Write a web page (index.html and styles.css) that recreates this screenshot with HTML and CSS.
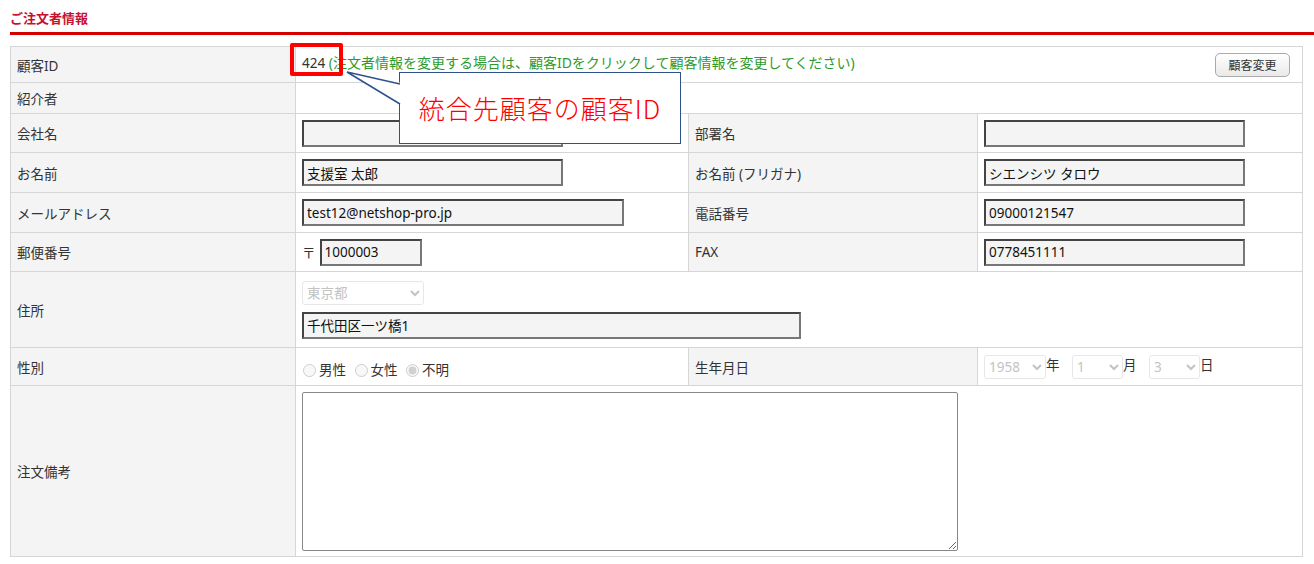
FILE: index.html
```html
<!DOCTYPE html>
<html lang="ja">
<head>
  <meta charset="UTF-8">
  <title>ご注文者情報</title>
  <link rel="stylesheet" href="styles.css">
</head>
<body>
  <div class="page">
    <h3 class="section-title">ご注文者情報</h3>

    <table class="form-table">
      <colgroup>
        <col style="width: 285px">
        <col style="width: 393px">
        <col style="width: 289px">
        <col>
      </colgroup>
      <tr class="row-id">
        <th>顧客ID</th>
        <td colspan="3" class="id-cell">
          <span class="cust-id">424</span> <span class="note">(注文者情報を変更する場合は、顧客IDをクリックして顧客情報を変更してください)</span>
          <button class="btn-small">顧客変更</button>
        </td>
      </tr>
      <tr class="row-ref">
        <th>紹介者</th>
        <td colspan="3"></td>
      </tr>
      <tr class="row-std short">
        <th>会社名</th>
        <td><input type="text" class="box w260" value=""></td>
        <th>部署名</th>
        <td><input type="text" class="box w260" value=""></td>
      </tr>
      <tr class="row-std">
        <th>お名前</th>
        <td><input type="text" class="box w260" value="支援室 太郎"></td>
        <th>お名前 (フリガナ)</th>
        <td><input type="text" class="box w260" value="シエンシツ タロウ"></td>
      </tr>
      <tr class="row-std">
        <th>メールアドレス</th>
        <td><input type="text" class="box w321" value="test12@netshop-pro.jp"></td>
        <th>電話番号</th>
        <td><input type="text" class="box w260" value="09000121547"></td>
      </tr>
      <tr class="row-std short">
        <th>郵便番号</th>
        <td><span class="zip-mark">〒</span><input type="text" class="box w101" value="1000003"></td>
        <th>FAX</th>
        <td><input type="text" class="box w260" value="0778451111"></td>
      </tr>
      <tr class="row-addr">
        <th>住所</th>
        <td colspan="3">
          <div class="addr">
            <select class="sel w121" disabled><option>東京都</option></select>
            <input type="text" class="box w498" value="千代田区一ツ橋1">
          </div>
        </td>
      </tr>
      <tr class="row-sex">
        <th>性別</th>
        <td>
          <label class="radio"><input type="radio" name="sex" disabled>男性</label>
          <label class="radio"><input type="radio" name="sex" disabled>女性</label>
          <label class="radio"><input type="radio" name="sex" checked disabled>不明</label>
        </td>
        <th>生年月日</th>
        <td class="birth">
          <select class="sel w62" disabled><option>1958</option></select>年
          <select class="sel w51" disabled><option>1</option></select>月
          <select class="sel w51" disabled><option>3</option></select>日
        </td>
      </tr>
      <tr class="row-memo">
        <th>注文備考</th>
        <td colspan="3"><textarea class="memo"></textarea></td>
      </tr>
    </table>

    <div class="highlight"></div>
    <svg class="callout-tail" width="64" height="44" viewBox="0 0 64 44">
      <polygon points="7,6 62,17 62,39" fill="#fff"/>
      <polyline points="60,18 7,6 60,38" fill="none" stroke="#2f528f" stroke-width="1.5"/>
    </svg>
    <div class="callout">統合先顧客の顧客ID</div>
  </div>
</body>
</html>
```

FILE: styles.css
```css
* {
  box-sizing: border-box;
}

body {
  margin: 0;
  background: #fff;
  font-family: "Noto Sans", "Noto Sans CJK JP", sans-serif;
  font-size: 13.5px;
  color: #333;
}

.page {
  position: relative;
  padding: 0 10px;
}

.section-title {
  margin: 0 -10px 0 0;
  padding-top: 9px;
  height: 35px;
  font-size: 13px;
  font-weight: bold;
  color: #c8102e;
  line-height: 18px;
  border-bottom: 3px solid #d40000;
}

.form-table {
  margin-top: 11px;
  width: 1293px;
  border-collapse: collapse;
  table-layout: fixed;
}

.form-table th,
.form-table td {
  border: 1px solid #d6d6d6;
  padding: 0 6px;
  text-align: left;
  vertical-align: middle;
}

.form-table th {
  background: #f3f4f3;
  font-weight: normal;
  color: #333;
}

.row-id { height: 36px; }
.row-ref { height: 31px; }
.row-std { height: 40px; }
.row-std.short { height: 39px; }
.row-addr { height: 76px; }
.row-sex { height: 38px; }
.row-memo { height: 171px; }

.id-cell {
  position: relative;
  padding-bottom: 5px !important;
}

.cust-id {
  color: #333;
}

.note {
  color: #2e9a2e;
  font-size: 14px;
}

.btn-small {
  position: absolute;
  right: 12px;
  top: 6px;
  height: 24px;
  width: 75px;
  padding: 0;
  font-family: inherit;
  font-size: 12px;
  color: #333;
  border: 1px solid #aaa;
  border-radius: 5px;
  background: linear-gradient(#fff, #e9e9e9);
}

.box {
  height: 27px;
  padding: 0 3px;
  font-family: inherit;
  font-size: 13.5px;
  color: #111;
  background: #f3f4f3;
  border: 2px solid #444;
  border-right-color: #777;
  border-bottom-color: #777;
  vertical-align: middle;
}

.w101 { width: 102px; }
.w260 { width: 261px; }
.w321 { width: 322px; }
.w498 { width: 499px; }

.zip-mark {
  margin-right: 4px;
  vertical-align: middle;
}

.addr {
  display: flex;
  flex-direction: column;
  align-items: flex-start;
  gap: 7px;
}

.sel {
  height: 24px;
  font-family: inherit;
  font-size: 13.5px;
  color: #aaa;
  background: #fff;
  border: 1px solid #ddd;
  border-radius: 3px;
  vertical-align: middle;
}

.w121 { width: 122px; }
.w62 { width: 62px; }
.w51 { width: 51px; }

.birth .w51 {
  margin-left: 9px;
}

.radio {
  margin-right: 3px;
  color: #333;
}

.radio input {
  width: 13px;
  height: 13px;
  margin: 0 3px 0 2px;
  vertical-align: -2px;
}

.row-sex td:nth-child(2) {
  padding: 4px 0 0 5px;
}

.memo {
  display: block;
  width: 656px;
  height: 159px;
  border: 1px solid #888;
  border-radius: 2px;
  resize: both;
}

.highlight {
  position: absolute;
  left: 290px;
  top: 43px;
  width: 53px;
  height: 33px;
  border: 4px solid #ff0000;
  border-radius: 2px;
}

.callout {
  position: absolute;
  left: 399px;
  top: 72px;
  width: 282px;
  height: 72px;
  background: #fff;
  border: 1.5px solid #2f528f;
  color: #ff0000;
  font-family: "Noto Sans CJK JP", sans-serif;
  font-size: 26px;
  font-weight: 300;
  letter-spacing: 1px;
  display: flex;
  align-items: center;
  justify-content: center;
  padding-bottom: 2px;
}

.callout-tail {
  position: absolute;
  left: 340px;
  top: 66px;
  z-index: 2;
}
```
